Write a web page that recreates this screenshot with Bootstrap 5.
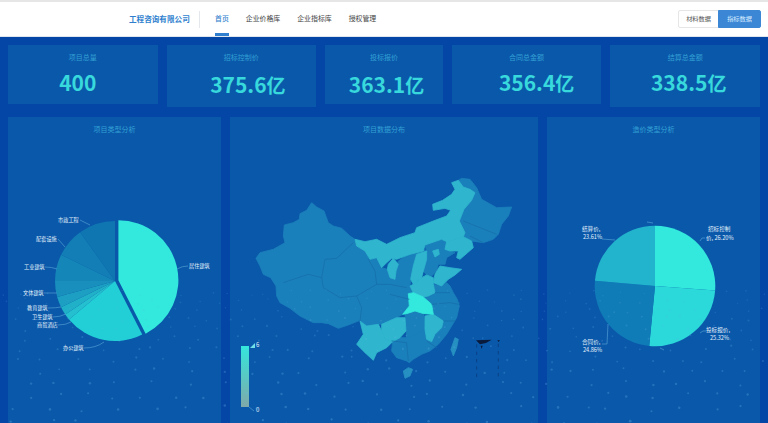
<!DOCTYPE html>
<html lang="zh-CN">
<head>
  <meta charset="UTF-8">
  <meta name="viewport" content="width=device-width, initial-scale=1.0">
  <title>工程咨询有限公司</title>
  <link href="https://cdn.jsdelivr.net/npm/bootstrap@5.3.0/dist/css/bootstrap.min.css" rel="stylesheet">
  <style>
    html, body {
      height: 423px;
      overflow: hidden;
    }
    body {
      background-color: #0446a6;
      font-family: "Noto Sans CJK SC", "Liberation Sans", sans-serif;
    }
    .screen-wrap {
      position: relative;
      height: 423px;
      overflow: hidden;
    }
    .top-bar {
      height: 37px;
      padding: 0;
      background-color: #fff;
      border-top: 2px solid #e6e6e6;
      border-bottom: 1px solid #dfe6ee;
    }
    .brand-name {
      width: 61px;
      margin: 0 0 0 129px;
      padding: 0;
      color: #2f7fce;
      font-size: 7.6px;
      font-weight: 700;
      white-space: nowrap;
    }
    .brand-sep {
      width: 1px;
      height: 17px;
      margin: 0 15px 0 9px;
      background-color: #e4e8ec;
    }
    .top-links {
      gap: 17px;
      height: 34px;
    }
    .navbar-expand .top-links .nav-link {
      height: 34px;
      padding: 0;
      color: #444;
      font-size: 6.9px;
      line-height: 32px;
      white-space: nowrap;
    }
    .navbar-expand .top-links .nav-link.active {
      color: #2f7fce;
      font-weight: 500;
      border-bottom: 3px solid #2f7fce;
    }
    .data-switch {
      margin-right: 7px;
    }
    .data-switch .btn {
      height: 18px;
      padding: 0;
      border-radius: 2px;
      font-size: 6.2px;
      line-height: 16px;
    }
    .btn-material {
      width: 41px;
      color: #555;
      background-color: #fff;
      border: 1px solid #e6e6e6;
    }
    .btn-target {
      width: 43px;
      color: #d8ecff;
      background-color: #3b87d6;
      border: 1px solid #3b87d6;
    }
    .board {
      padding: 8px 8px 0;
    }
    .stat-row {
      gap: 9px;
      height: 63px;
    }
    .stat-box, .chart-box {
      color: #33a0d4;
      background-color: #0a58aa;
    }
    .stat-box {
      height: 59px;
      padding-top: 7px;
    }
    .stat-tall {
      height: 62px;
    }
    .stat-wide {
      width: 150px;
    }
    .stat-narrow {
      width: 118px;
    }
    .stat-name {
      font-size: 7px;
      line-height: 11px;
    }
    .stat-num {
      margin-top: 5px;
      color: #38d9dc;
      font-size: 21px;
      font-weight: 700;
      line-height: 28px;
      white-space: nowrap;
    }
    .stat-unit {
      font-size: 19px;
    }
    /* the figures do not sit on the card centre in the original */
    .num-count {
      margin-right: 10px;
    }
    .num-control {
      margin-top: 7px;
      margin-left: 13px;
    }
    .num-bid {
      margin-top: 7px;
      margin-left: 5px;
    }
    .num-contract {
      margin-left: 20px;
    }
    .num-settle {
      margin-left: 7px;
    }
    .chart-row {
      gap: 9px;
      height: 307px;
      margin-top: 9px;
    }
    .chart-side {
      width: 213px;
    }
    .chart-main {
      width: 308px;
    }
    .chart-name {
      height: 26px;
      font-size: 7px;
      line-height: 24px;
    }
    .chart-svg {
      display: block;
      width: 100%;
      height: 281px;
    }
    .chart-svg text {
      fill: #e4f2fb;
      font-family: "Noto Sans CJK SC", "Liberation Sans", sans-serif;
    }
    .pie-line {
      fill: none;
      stroke: #5aa8d8;
      stroke-width: 0.6;
    }
    .map-fill path {
      stroke-width: 2.5;
      stroke-linejoin: round;
    }
    .map-dark {
      fill: #1a80bb;
      stroke: #1a80bb;
    }
    .map-light {
      fill: #2fb6ce;
      stroke: #2fb6ce;
    }
    .map-isle {
      fill: #2690c2;
      stroke: #2690c2;
    }
    .map-line {
      fill: none;
      stroke: #1670ab;
      stroke-width: 1.4;
    }
    .dot-layer {
      position: absolute;
      top: 0;
      left: 0;
      pointer-events: none;
    }
  </style>
</head>
<body>
  <div class="screen-wrap">
    <nav class="navbar navbar-expand top-bar">
      <div class="d-flex align-items-center w-100">
        <a class="navbar-brand brand-name" href="#">工程咨询有限公司</a>
        <span class="brand-sep"></span>
        <ul class="navbar-nav top-links">
          <li class="nav-item"><a class="nav-link active" href="#">首页</a></li>
          <li class="nav-item"><a class="nav-link" href="#">企业价格库</a></li>
          <li class="nav-item"><a class="nav-link" href="#">企业指标库</a></li>
          <li class="nav-item"><a class="nav-link" href="#">授权管理</a></li>
        </ul>
        <div class="btn-group ms-auto data-switch">
          <button type="button" class="btn btn-material">材料数据</button>
          <button type="button" class="btn btn-target">指标数据</button>
        </div>
      </div>
    </nav>

    <div class="board">
      <div class="d-flex align-items-start stat-row">
        <div class="card border-0 rounded-0 text-center stat-box stat-wide">
          <div class="stat-name">项目总量</div>
          <div class="stat-num num-count">400</div>
        </div>
        <div class="card border-0 rounded-0 text-center stat-box stat-wide stat-tall">
          <div class="stat-name">招标控制价</div>
          <div class="stat-num num-control">375.6<span class="stat-unit">亿</span></div>
        </div>
        <div class="card border-0 rounded-0 text-center stat-box stat-narrow">
          <div class="stat-name">投标报价</div>
          <div class="stat-num num-bid">363.1<span class="stat-unit">亿</span></div>
        </div>
        <div class="card border-0 rounded-0 text-center stat-box stat-wide">
          <div class="stat-name">合同总金额</div>
          <div class="stat-num num-contract">356.4<span class="stat-unit">亿</span></div>
        </div>
        <div class="card border-0 rounded-0 text-center stat-box stat-wide stat-tall">
          <div class="stat-name">结算总金额</div>
          <div class="stat-num num-settle">338.5<span class="stat-unit">亿</span></div>
        </div>
      </div>

      <div class="d-flex chart-row">
        <div class="card border-0 rounded-0 text-center chart-box chart-side">
          <div class="chart-name">项目类型分析</div>
          <svg class="chart-svg" viewBox="8 142 213 281">
            <g id="type-pie"></g>
            <path class="pie-line" d="M177 268 Q182 265 188 265 M104 341 Q96 347 84 347 M71 321 Q66 324 58 324 M66 313 Q60 316 53 316 M61 306 Q56 307 48 307 M57 292 L44 292 M57 268 Q52 266 45 266 M65 246 L58 238 M90 224 L80 219"/>
            <g font-size="5.2">
              <text x="189" y="267">居住建筑</text>
              <text x="63" y="349">办公建筑</text>
              <text x="37" y="326">商贸酒店</text>
              <text x="32" y="318">卫生建筑</text>
              <text x="27" y="309">教育建筑</text>
              <text x="23" y="294">文体建筑</text>
              <text x="24" y="268">工业建筑</text>
              <text x="36" y="240">配套设施</text>
              <text x="58" y="221">市政工程</text>
            </g>
          </svg>
        </div>

        <div class="card border-0 rounded-0 text-center chart-box chart-main">
          <div class="chart-name">项目数据分布</div>
          <svg class="chart-svg" viewBox="230 142 308 281">
            <defs>
              <linearGradient id="range-fill" x1="0" y1="0" x2="0" y2="1">
                <stop offset="0" stop-color="#34e6dc"/>
                <stop offset="1" stop-color="#7fa9aa"/>
              </linearGradient>
            </defs>
            <g transform="translate(250 170) scale(0.3333)" class="map-fill">
              <g class="map-dark">
                <path d="M185 95 200 108 222 120 235 155 250 165 275 172 300 195 315 205 320 225 345 240 360 265 380 260 395 290 412 295 420 320 435 325 438 300 445 270 480 245 520 235 530 240 500 250 482 325 480 345 490 365 475 368 478 405 458 430 440 440 395 460 385 460 350 465 330 448 295 462 265 472 235 458 215 455 190 455 150 435 120 412 90 395 80 375 78 345 62 320 40 310 30 285 18 262 30 245 70 235 105 215 100 195 103 162 130 155 148 145 150 128 170 118Z"/>
                <path d="M635 22 660 25 680 50 695 85 740 110 785 108 775 135 755 160 745 190 730 205 700 215 665 210 640 197 645 185 628 150 642 115 665 88 675 65 660 55 640 48 625 28Z"/>
                <path d="M525 222 560 210 575 205 590 212 585 235 600 240 615 245 590 260 585 280 565 280 560 300 545 315 530 312 520 300 530 265 530 240Z"/>
                <path d="M465 430 495 420 522 432 525 475 500 490 470 500 468 470Z"/>
                <path d="M550 340 575 345 590 335 600 345 610 365 622 385 628 405 620 440 605 465 590 490 565 520 540 540 515 550 490 565 478 575 470 570 440 560 425 540 428 512 450 500 470 500 500 490 525 475 530 505 545 512 555 490 575 470 580 450 550 430 545 400 520 378 535 375 555 365Z"/>
                <path class="map-isle" d="M615 500 625 505 620 530 610 555 603 535Z"/>
                <path class="map-isle" d="M460 600 475 590 488 595 480 615 465 622Z"/>
              </g>
              <g class="map-light">
                <path d="M315 205 345 212 380 205 410 220 450 200 495 185 500 170 550 150 590 135 602 118 585 112 550 118 548 100 578 88 605 70 615 55 605 35 625 28 640 48 660 55 675 65 665 88 642 115 628 150 645 185 640 197 590 212 575 205 560 210 525 222 520 240 480 250 440 265 425 262 410 275 395 290 380 260 360 265 345 240 320 225Z"/>
                <path d="M415 280 430 262 445 280 438 300 435 325 420 320 412 295Z"/>
                <path d="M500 250 530 240 530 265 520 300 515 320 490 340 482 325 490 285Z"/>
                <path d="M590 212 640 197 665 210 670 230 630 265 620 260 625 240 600 240 585 235Z"/>
                <path d="M548 240 565 235 568 250 555 258Z"/>
                <path d="M555 310 570 285 600 290 635 295 615 312 595 325 575 345 550 335Z"/>
                <path d="M490 340 515 320 530 312 550 320 550 340 555 365 535 375 520 378 490 365 480 345Z"/>
                <path d="M525 435 550 430 580 450 575 470 555 490 545 512 530 505 525 475Z"/>
                <path d="M395 460 440 440 465 440 468 480 450 500 428 512 405 505 395 480Z"/>
                <path d="M330 450 350 465 385 460 395 480 405 505 428 512 410 530 380 545 370 568 345 545 320 520 340 490Z"/>
              </g>
              <path fill="#33e8dc" stroke="#33e8dc" d="M475 368 490 365 520 378 545 400 550 430 520 428 495 420 470 428 458 430 478 405Z"/>
              <path class="map-line" d="M100 335 175 310 215 320 M225 265 260 262 310 215 M215 320 225 265 M215 320 220 350 270 380 320 375 380 340 375 300 355 265 M320 375 335 410 330 450 M380 340 420 340 470 350 M420 370 478 385 M545 400 600 395 625 400 M555 365 600 365 M580 450 615 450 M530 510 560 530 M425 510 470 515 475 570 M640 150 740 190 M660 195 700 215"/>
              <path fill="#0a1a3a" d="M678 508 725 506 708 516 690 520Z M742 508 750 508 746 513Z M692 524 698 524 695 534Z"/>
              <path d="M680 520V620M745 518V620" stroke="#0a3c80" stroke-width="2" stroke-dasharray="10 12" fill="none"/>
            </g>
            <rect x="241" y="345" width="8" height="61" fill="url(#range-fill)"/>
            <path d="M250 347 255 342 255 347Z" fill="#6fe0e8"/>
            <path class="pie-line" d="M249 406 254 410"/>
            <text x="256" y="345.5" font-size="6">6</text>
            <text x="256" y="411" font-size="6">0</text>
          </svg>
        </div>

        <div class="card border-0 rounded-0 text-center chart-box chart-side">
          <div class="chart-name">造价类型分析</div>
          <svg class="chart-svg" viewBox="547 142 213 281">
            <g id="cost-pie"></g>
            <path class="pie-line" d="M700 240 702 237 705 237 M700 332 703 330 706 330 M608 323 607 343 602 343 M602 238 615 239 M647 221 653 222 M660 347 664 349"/>
            <g font-size="5.6">
              <text x="708" y="230">招标控制</text>
              <text x="706" y="239">价, 26.20%</text>
              <text x="706" y="331">投标报价,</text>
              <text x="710" y="339">25.32%</text>
              <text x="582" y="343">合同价,</text>
              <text x="583" y="351">24.86%</text>
              <text x="582" y="230">结算价,</text>
              <text x="583" y="238">23.61%</text>
            </g>
          </svg>
        </div>
      </div>
    </div>

    <svg class="dot-layer" id="dots" width="768" height="423"></svg>
  </div>

  <script src="https://cdn.jsdelivr.net/npm/bootstrap@5.3.0/dist/js/bootstrap.bundle.min.js"></script>
  <script>
    const svgNs = 'http://www.w3.org/2000/svg';

    function addSlice(group, cx, cy, r, from, to, color) {
      const a = (from - 90) * Math.PI / 180;
      const b = (to - 90) * Math.PI / 180;
      const large = to - from > 180 ? 1 : 0;
      const path = document.createElementNS(svgNs, 'path');
      path.setAttribute('d', `M${cx} ${cy}L${cx + r * Math.cos(a)} ${cy + r * Math.sin(a)}A${r} ${r} 0 ${large} 1 ${cx + r * Math.cos(b)} ${cy + r * Math.sin(b)}Z`);
      path.setAttribute('fill', color);
      group.appendChild(path);
    }

    const typePie = document.getElementById('type-pie');
    addSlice(typePie, 118.4, 279.2, 60, 0, 153, '#33e8dc');
    [
      [153, 230, '#22cfd6'],
      [230, 236, '#25c0cf'],
      [236, 244, '#20b0c8'],
      [244, 254.5, '#1c9fc2'],
      [254.5, 270, '#188fbc'],
      [270, 296, '#1586b8'],
      [296, 324.5, '#127eb5'],
      [324.5, 360, '#0f76b2']
    ].forEach(s => addSlice(typePie, 115, 280, 60, s[0], s[1], s[2]));

    const costPie = document.getElementById('cost-pie');
    [
      [0, 94.3, '#33e8dc'],
      [94.3, 185.5, '#2bd8da'],
      [185.5, 275, '#107cb7'],
      [275, 360, '#22b4cc']
    ].forEach(s => addSlice(costPie, 655, 285, 60.3, s[0], s[1], s[2]));

    // floor dots, spread out towards the bottom of the screen
    const dots = document.getElementById('dots');
    let seed = 17;
    function rand() {
      seed = (seed * 16807) % 2147483647;
      return seed / 2147483647;
    }
    for (let y = 290, row = 0; y < 423; row++) {
      const gap = 20 + row * 1.2;
      for (let x = rand() * gap; x < 768; x += gap) {
        const dot = document.createElementNS(svgNs, 'circle');
        dot.setAttribute('cx', (x + rand() * gap * 0.7).toFixed(1));
        dot.setAttribute('cy', (y + rand() * 6).toFixed(1));
        dot.setAttribute('r', (0.6 + row * 0.04 + rand() * 0.3).toFixed(2));
        dot.setAttribute('fill', '#6ab8ea');
        dot.setAttribute('opacity', (0.16 + row * 0.012).toFixed(2));
        dots.appendChild(dot);
      }
      y += 8 + row * 0.5;
    }
  </script>
</body>
</html>
